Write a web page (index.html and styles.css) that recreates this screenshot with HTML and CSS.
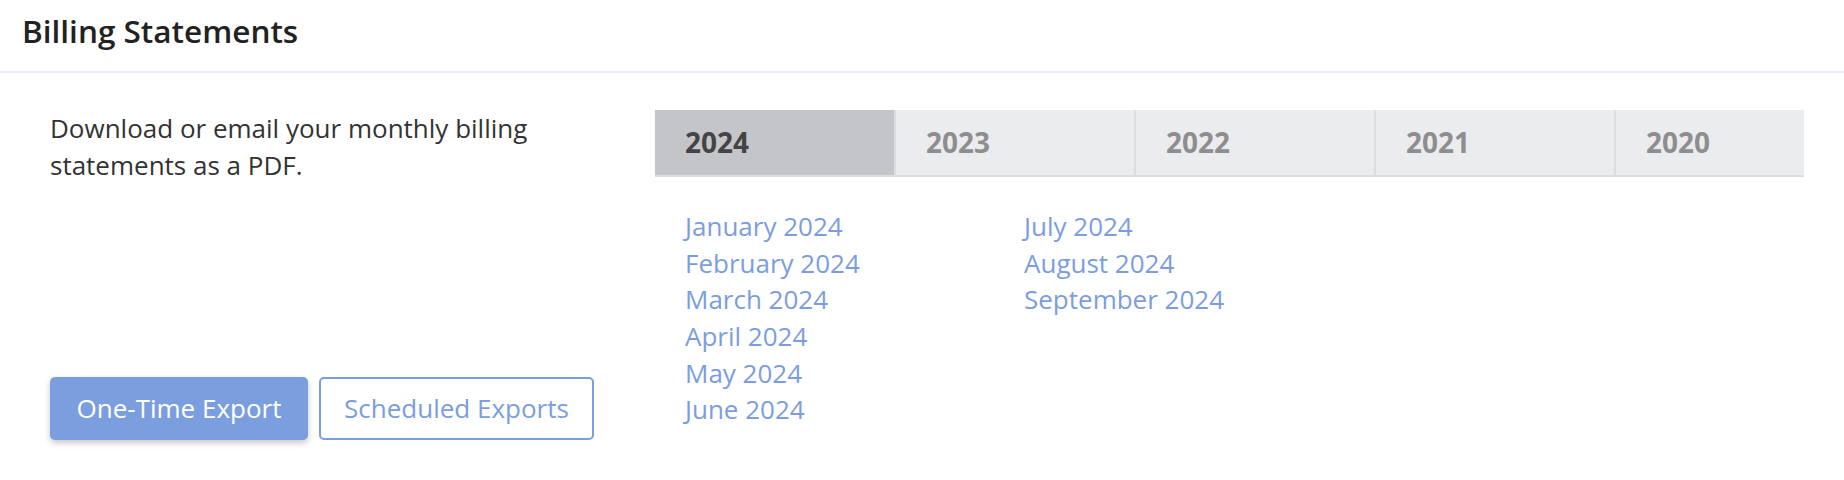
FILE: index.html
```html
<!DOCTYPE html>
<html lang="en">
<head>
<meta charset="utf-8">
<title>Billing Statements</title>
<link rel="stylesheet" href="styles.css">
</head>
<body>
<section class="panel">
  <header class="panel-header">
    <h1 class="panel-title">Billing Statements</h1>
  </header>
  <div class="panel-body">
    <div class="intro">
      <p class="intro-text">Download or email your monthly billing statements as a PDF.</p>
      <div class="actions">
        <button class="btn btn-primary" type="button">One-Time Export</button>
        <button class="btn btn-outline" type="button">Scheduled Exports</button>
      </div>
    </div>
    <div class="statements">
      <nav class="year-tabs">
        <a class="year-tab is-active" href="#">2024</a>
        <a class="year-tab" href="#">2023</a>
        <a class="year-tab" href="#">2022</a>
        <a class="year-tab" href="#">2021</a>
        <a class="year-tab year-tab-last" href="#">2020</a>
      </nav>
      <ul class="months">
        <li><a href="#">January 2024</a></li>
        <li><a href="#">February 2024</a></li>
        <li><a href="#">March 2024</a></li>
        <li><a href="#">April 2024</a></li>
        <li><a href="#">May 2024</a></li>
        <li><a href="#">June 2024</a></li>
        <li><a href="#">July 2024</a></li>
        <li><a href="#">August 2024</a></li>
        <li><a href="#">September 2024</a></li>
      </ul>
    </div>
  </div>
</section>
</body>
</html>
```

FILE: styles.css
```css
* { box-sizing: border-box; }

html, body {
  margin: 0;
  padding: 0;
  background: #ffffff;
}

body {
  font-family: "Open Sans", "Noto Sans", sans-serif;
  color: #333333;
}

.panel {
  width: 1844px;
  height: 480px;
  overflow: hidden;
}

.panel-header {
  padding: 11px 22px 20px;
  border-bottom: 2px solid #eceefa;
}

.panel-title {
  margin: 0;
  font-size: 31.5px;
  line-height: 40px;
  font-weight: 600;
  color: #222222;
}

.panel-body {
  display: flex;
  padding: 37px 40px 0 50px;
}

.intro {
  width: 605px;
  flex: none;
  display: flex;
  flex-direction: column;
}

.intro-text {
  margin: 0;
  width: 500px;
  font-size: 26px;
  line-height: 36.66px;
  color: #333333;
}

.actions {
  margin-top: auto;
  display: flex;
  gap: 11px;
}

.btn {
  height: 63px;
  border-radius: 5px;
  font-family: inherit;
  font-size: 26px;
  padding: 0;
  cursor: pointer;
}

.btn-primary {
  width: 258px;
  background: #7a9ede;
  border: none;
  color: #ffffff;
  box-shadow: 0 3px 6px rgba(0, 0, 0, 0.22);
}

.btn-outline {
  width: 275px;
  background: #ffffff;
  border: 2px solid #7a9ede;
  color: #7a9ede;
}

.statements {
  width: 1149px;
  flex: none;
  overflow: hidden;
  padding-bottom: 12px;
}

.year-tabs {
  display: flex;
  height: 67px;
  border-bottom: 2px solid #dcdddf;
}

.year-tab {
  flex: none;
  width: 240px;
  height: 65px;
  padding: 14px 0 0 30px;
  background: #ebecee;
  border-left: 2px solid #dcdddf;
  font-size: 28px;
  line-height: 36px;
  font-weight: 700;
  color: #8e8e8e;
  text-decoration: none;
}

.year-tab.is-active {
  width: 239px;
  border-left: none;
  background: #c4c5c8;
  color: #444444;
}

.year-tab-last {
  width: 190px;
}

.months {
  list-style: none;
  margin: 31px 0 0 30px;
  padding: 0;
  display: grid;
  grid-template-columns: 339px 339px;
  grid-template-rows: repeat(6, 36.66px);
  grid-auto-flow: column;
}

.months a {
  font-size: 26px;
  line-height: 36.66px;
  color: #7b9ddf;
  text-decoration: none;
}
```
